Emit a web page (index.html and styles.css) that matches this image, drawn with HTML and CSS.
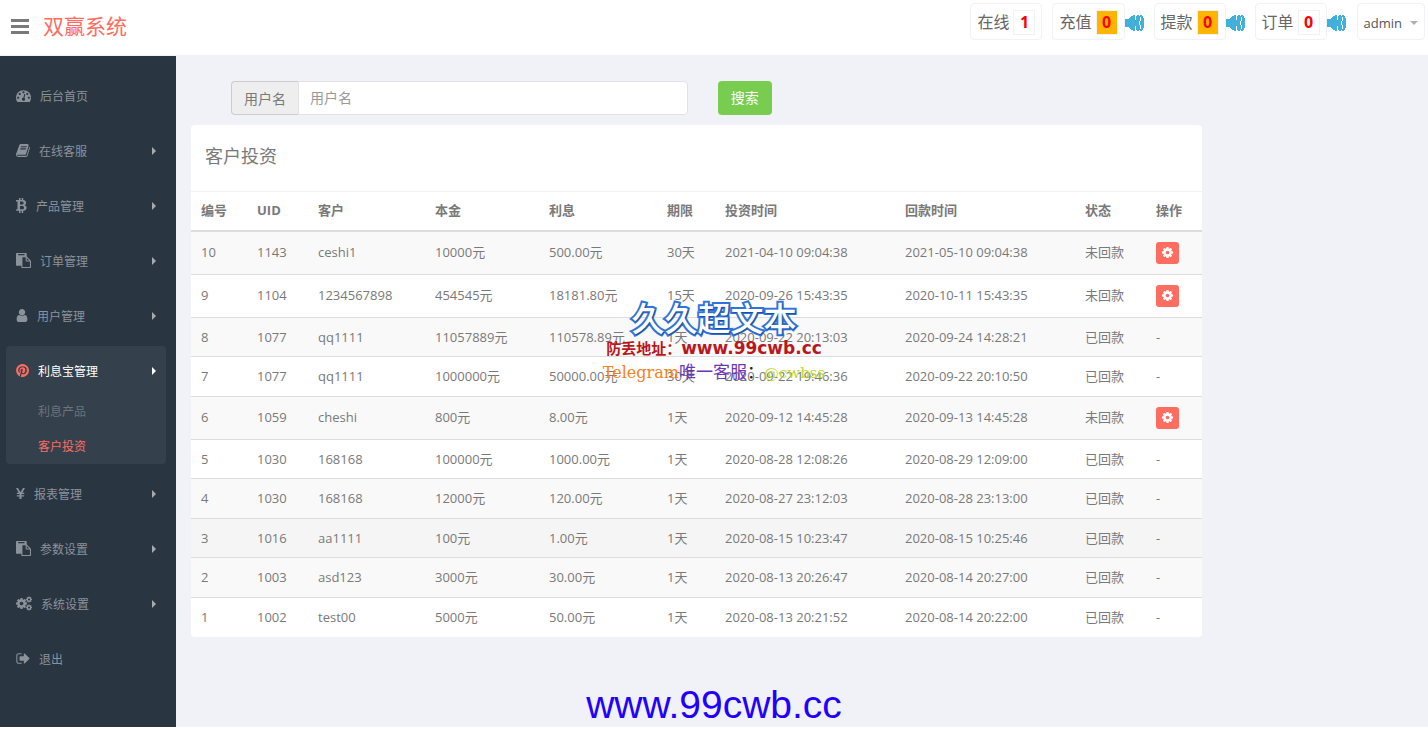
FILE: index.html
```
<!DOCTYPE html>
<html lang="zh-CN">
<head>
<meta charset="utf-8">
<title>双赢系统</title>
<link rel="stylesheet" href="styles.css">
</head>
<body>
<svg class="sprite" aria-hidden="true">
  <symbol id="cog" viewBox="0 0 1792 1792"><path d="M1152 896q0-106-75-181t-181-75-181 75-75 181 75 181 181 75 181-75 75-181zm512-109v222q0 12-8 23t-20 13l-185 28q-19 54-39 91 35 50 107 138 10 12 10 25t-9 23q-27 37-99 108t-94 71q-12 0-26-9l-138-108q-44 23-91 38-16 136-29 186-7 28-36 28h-222q-14 0-24.500-8.500t-11.500-21.500l-28-184q-49-16-90-37l-141 107q-10 9-25 9-14 0-25-11-126-114-165-168-7-10-7-23 0-12 8-23 15-21 51-66.500t54-70.500q-27-50-41-99l-183-27q-13-2-21-12.500t-8-23.500v-222q0-12 8-23t19-13l186-28q14-46 39-92-40-57-107-138-10-12-10-24 0-10 9-23 26-36 98.500-107.500t94.500-71.500q13 0 26 10l138 107q44-23 91-38 16-136 29-186 7-28 36-28h222q14 0 24.500 8.500t11.500 21.500l28 184q49 16 90 37l142-107q9-9 24-9 13 0 25 10 129 119 165 170 7 8 7 22 0 12-8 23-15 21-51 66.500t-54 70.500q26 50 41 98l183 28q13 2 21 12.500t8 23.500z"/></symbol>
  <symbol id="paste" viewBox="0 0 1792 1792"><path d="M768 1664h896v-640h-416q-40 0-68-28t-28-68v-416h-384v1152zm256-1440v-64q0-13-9.500-22.500t-22.500-9.500h-704q-13 0-22.500 9.500t-9.500 22.500v64q0 13 9.500 22.500t22.500 9.500h704q13 0 22.500-9.500t9.500-22.500zm256 672h299l-299-299v299zm512 128v672q0 40-28 68t-68 28h-960q-40 0-68-28t-28-68v-160h-544q-40 0-68-28t-28-68v-1344q0-40 28-68t68-28h1088q40 0 68 28t28 68v328q21 13 36 28l408 408q28 28 48 76t20 88z"/></symbol>
  <symbol id="sound" viewBox="0 0 19 18"><path d="M0 5h4V4h1V3h1V2h2V1h2v16H8v-1H6v-1H5v-1H4v-1H0zM11 2h1V1h2v1h1v5h-1v4h1v5h-1v1h-2v-1h-1v-4h-1V6h1zM15 1h2v1h1v2h1v10h-1v2h-1v1h-2v-2h1v-4h-1V7h1V3h-1z"/></symbol>
</svg>

<header class="header">
  <button class="toggle" type="button" aria-label="菜单"><svg width="18" height="16" viewBox="0 0 18 16"><path d="M0 1h18v3H0zM0 7h18v3H0zM0 13h18v3H0z"/></svg></button>
  <a class="logo" href="#">双赢系统</a>
  <div class="notices">
    <a class="notice" href="#">在线<b class="count">1</b></a>
    <div class="notice-group"><a class="notice" href="#">充值<b class="count count-alert">0</b></a><svg class="sound"><use href="#sound"/></svg></div>
    <div class="notice-group"><a class="notice" href="#">提款<b class="count count-alert">0</b></a><svg class="sound"><use href="#sound"/></svg></div>
    <div class="notice-group"><a class="notice" href="#">订单<b class="count">0</b></a><svg class="sound"><use href="#sound"/></svg></div>
    <button class="account" type="button">admin<span class="caret"></span></button>
  </div>
</header>

<div class="layout">
  <nav class="sidebar">
    <ul class="menu">
      <li><a class="menu-link" href="#"><svg width="15" height="15" viewBox="0 0 1792 1792"><path d="M384 1152q0-53-37.500-90.500t-90.500-37.500-90.500 37.500-37.500 90.500 37.500 90.500 90.500 37.500 90.500-37.500 37.500-90.500zm192-448q0-53-37.500-90.500t-90.500-37.500-90.500 37.500-37.500 90.500 37.500 90.500 90.500 37.500 90.500-37.500 37.500-90.500zm428 481l101-382q6-26-7.500-48.500t-38.500-29.500-48 6.500-30 39.500l-101 382q-60 5-107 43.500t-63 98.500q-20 77 20 146t117 89 146-20 89-117q16-60-6-117t-72-91zm660-33q0-53-37.500-90.500t-90.500-37.500-90.500 37.500-37.500 90.500 37.500 90.500 90.500 37.500 90.500-37.500 37.500-90.500zm-640-640q0-53-37.500-90.500t-90.500-37.500-90.500 37.500-37.500 90.500 37.500 90.500 90.500 37.500 90.500-37.500 37.500-90.500zm448 192q0-53-37.500-90.500t-90.500-37.500-90.500 37.500-37.500 90.500 37.500 90.500 90.500 37.500 90.500-37.500 37.500-90.500zm320 448q0 261-141 483-19 29-54 29h-1402q-35 0-54-29-141-221-141-483 0-182 71-348t191-286 286-191 348-71 348 71 286 191 191 286 71 348z"/></svg>后台首页</a></li>
      <li><a class="menu-link has-sub" href="#"><svg width="14" height="15" viewBox="64 0 1664 1792"><path d="M1703 478q40 57 18 129l-275 906q-19 64-76.500 107.500t-122.500 43.500h-923q-77 0-148.500-53.500t-99.500-131.500q-24-67-2-127 0-4 3-27t4-37q1-8-3-21.500t-3-19.500q2-11 8-21t16.500-23.500 16.500-23.500q23-38 45-91.500t30-91.500q3-10 .5-30t-.5-28q3-11 17-28t17-23q21-36 42-92t25-90q1-9-2.500-32t.5-28q4-13 22-30.500t22-22.500q19-26 42.500-84.500t27.500-96.500q1-8-3-25.500t-2-26.500q2-8 9-18t18-23 17-21q8-12 16.500-30.500t15-35 16-36 19.500-32 26.500-23.500 36-11.500 47.500 5.500l-1 3q38-9 51-9h761q74 0 114 56t18 130l-274 906q-36 119-71.500 153.500t-128.500 34.500h-869q-27 0-38 15-11 16-1 43 24 70 144 70h923q29 0 56-15.500t35-41.500l300-987q7-22 5-57 38 15 59 43zm-1064 2q-4 13 2 22.500t20 9.500h608q13 0 25.500-9.500t16.500-22.500l21-64q4-13-2-22.500t-20-9.500h-608q-13 0-25.500 9.500t-16.500 22.500zm-83 256q-4 13 2 22.500t20 9.500h608q13 0 25.500-9.500t16.500-22.500l21-64q4-13-2-22.500t-20-9.500h-608q-13 0-25.500 9.500t-16.500 22.500z"/></svg>在线客服</a></li>
      <li><a class="menu-link has-sub" href="#"><svg width="11" height="15" viewBox="0 0 11 15"><path d="M0 2h3V0h1.500v2h1.200V0h1.500v2.100C9.200 2.400 10.200 3.400 10.100 5c0 1-.6 1.700-1.500 2.200 1.400.4 2.100 1.300 2 2.600-.1 2-1.400 2.800-3.400 3V15H5.700v-2.200H4.500V15H3v-2.200H0l.3-1.500h1.200V3.600H0zM4 3.600v3h1.400c1.500 0 2.200-.5 2.200-1.500S6.900 3.600 5.400 3.600zM4 8v3.300h1.700c1.600 0 2.400-.6 2.400-1.600S7.300 8 5.700 8z" fill-rule="evenodd"/></svg>产品管理</a></li>
      <li><a class="menu-link has-sub" href="#"><svg width="15" height="15"><use href="#paste"/></svg>订单管理</a></li>
      <li><a class="menu-link has-sub" href="#"><svg width="12" height="15" viewBox="256 0 1280 1792"><path d="M1536 1399q0 109-62.500 187t-150.500 78h-854q-88 0-150.500-78t-62.500-187q0-85 8.500-160.500t31.500-152 58.500-131 94-89 134.500-34.500q131 128 313 128t313-128q76 0 134.500 34.500t94 89 58.500 131 31.500 152 8.500 160.500zm-256-887q0 159-112.500 271.500t-271.500 112.500-271.500-112.500-112.500-271.500 112.500-271.500 271.500-112.500 271.500 112.500 112.500 271.500z"/></svg>用户管理</a></li>
      <li class="open">
        <a class="menu-link has-sub" href="#"><svg width="13" height="15" viewBox="128 0 1536 1792"><path d="M1664 896q0 209-103 385.500t-279.500 279.500-385.500 103q-111 0-218-32 59-93 78-164 9-34 54-211 20 39 73 67.500t114 28.500q121 0 216-68.500t147-188.500 52-270q0-114-59.500-214t-172.500-163-255-63q-105 0-196 29t-154.500 77-109 110.500-67 129.500-21.500 134q0 104 40 183t117 111q30 12 38-20 2-7 8-31t8-30q6-23-11-43-51-61-51-151 0-151 104.500-259.500t273.500-108.500q151 0 235.500 82t84.500 213q0 170-68.500 289t-175.500 119q-61 0-98-43.500t-23-104.500q8-35 26.500-93.500t30-103 11.500-75.500q0-50-27-83t-77-33q-62 0-105 57t-43 142q0 73 25 122l-99 418q-17 70-13 177-206-91-333-281t-127-423q0-209 103-385.500t279.500-279.500 385.500-103 385.500 103 279.500 279.500 103 385.500z"/></svg>利息宝管理</a>
        <ul class="submenu">
          <li><a class="sub-link" href="#">利息产品</a></li>
          <li><a class="sub-link current" href="#">客户投资</a></li>
        </ul>
      </li>
      <li><a class="menu-link has-sub" href="#"><svg width="9" height="15" viewBox="0 0 9 15"><path d="M0 2h2l2.500 4.300L7 2h2L6.300 6.800h1.900V8H5.500v1.200h2.700v1.200H5.500V13h-2v-2.600H.8V9.200h2.700V8H.8V6.800h1.900z"/></svg>报表管理</a></li>
      <li><a class="menu-link has-sub" href="#"><svg width="15" height="15"><use href="#paste"/></svg>参数设置</a></li>
      <li><a class="menu-link has-sub" href="#"><svg width="16" height="15" viewBox="0 0 16 15"><use href="#cog" x="-1" y="1" width="13" height="13"/><use href="#cog" x="9" y="0" width="8" height="7"/><use href="#cog" x="9" y="8" width="8" height="7"/></svg>系统设置</a></li>
      <li><a class="menu-link" href="#"><svg width="14" height="15" viewBox="64 0 1600 1792"><path d="M704 1440q0 4 1 20t.5 26.500-3 23.500-10 19.500-20.500 6.500h-320q-119 0-203.500-84.500t-84.500-203.500v-704q0-119 84.500-203.500t203.500-84.500h320q13 0 22.500 9.500t9.500 22.500q0 4 1 20t.5 26.500-3 23.500-10 19.500-20.500 6.500h-320q-66 0-113 47t-47 113v704q0 66 47 113t113 47h312l11.500 1 11.500 3 8 5.500 7 9 2 13.500zm928-544q0 26-19 45l-544 544q-19 19-45 19t-45-19-19-45v-288h-448q-26 0-45-19t-19-45v-384q0-26 19-45t45-19h448v-288q0-26 19-45t45-19 45 19l544 544q19 19 19 45z"/></svg>退出</a></li>
    </ul>
  </nav>

  <main class="main">
    <form class="search">
      <div class="input-group">
        <label for="username">用户名</label>
        <input id="username" type="text" placeholder="用户名">
      </div>
      <button class="btn-search" type="button">搜索</button>
    </form>

    <div class="content">
      <section class="panel">
        <h1 class="panel-title">客户投资</h1>
        <table class="records">
          <colgroup><col class="c-no"><col class="c-uid"><col class="c-name"><col class="c-sum"><col class="c-interest"><col class="c-term"><col class="c-time"><col class="c-time"><col class="c-state"><col class="c-action"></colgroup>
          <thead>
            <tr><th>编号</th><th>UID</th><th>客户</th><th>本金</th><th>利息</th><th>期限</th><th>投资时间</th><th>回款时间</th><th>状态</th><th>操作</th></tr>
          </thead>
          <tbody>
            <tr><td>10</td><td>1143</td><td>ceshi1</td><td>10000元</td><td>500.00元</td><td>30天</td><td>2021-04-10 09:04:38</td><td>2021-05-10 09:04:38</td><td>未回款</td><td><button class="btn-cog" type="button" aria-label="操作"><svg><use href="#cog"/></svg></button></td></tr>
            <tr><td>9</td><td>1104</td><td>1234567898</td><td>454545元</td><td>18181.80元</td><td>15天</td><td>2020-09-26 15:43:35</td><td>2020-10-11 15:43:35</td><td>未回款</td><td><button class="btn-cog" type="button" aria-label="操作"><svg><use href="#cog"/></svg></button></td></tr>
            <tr><td>8</td><td>1077</td><td>qq1111</td><td>11057889元</td><td>110578.89元</td><td>1天</td><td>2020-09-22 20:13:03</td><td>2020-09-24 14:28:21</td><td>已回款</td><td>-</td></tr>
            <tr><td>7</td><td>1077</td><td>qq1111</td><td>1000000元</td><td>50000.00元</td><td>30天</td><td>2020-09-22 19:46:36</td><td>2020-09-22 20:10:50</td><td>已回款</td><td>-</td></tr>
            <tr><td>6</td><td>1059</td><td>cheshi</td><td>800元</td><td>8.00元</td><td>1天</td><td>2020-09-12 14:45:28</td><td>2020-09-13 14:45:28</td><td>未回款</td><td><button class="btn-cog" type="button" aria-label="操作"><svg><use href="#cog"/></svg></button></td></tr>
            <tr><td>5</td><td>1030</td><td>168168</td><td>100000元</td><td>1000.00元</td><td>1天</td><td>2020-08-28 12:08:26</td><td>2020-08-29 12:09:00</td><td>已回款</td><td>-</td></tr>
            <tr><td>4</td><td>1030</td><td>168168</td><td>12000元</td><td>120.00元</td><td>1天</td><td>2020-08-27 23:12:03</td><td>2020-08-28 23:13:00</td><td>已回款</td><td>-</td></tr>
            <tr class="highlight"><td>3</td><td>1016</td><td>aa1111</td><td>100元</td><td>1.00元</td><td>1天</td><td>2020-08-15 10:23:47</td><td>2020-08-15 10:25:46</td><td>已回款</td><td>-</td></tr>
            <tr><td>2</td><td>1003</td><td>asd123</td><td>3000元</td><td>30.00元</td><td>1天</td><td>2020-08-13 20:26:47</td><td>2020-08-14 20:27:00</td><td>已回款</td><td>-</td></tr>
            <tr><td>1</td><td>1002</td><td>test00</td><td>5000元</td><td>50.00元</td><td>1天</td><td>2020-08-13 20:21:52</td><td>2020-08-14 20:22:00</td><td>已回款</td><td>-</td></tr>
          </tbody>
        </table>
      </section>
    </div>
  </main>
</div>

<div class="stamp">
  <div class="stamp-name">久久超文本</div>
  <div class="stamp-site">防丢地址：<span>www.99cwb.cc</span></div>
  <div class="stamp-contact"><span class="orange">Telegram</span><span class="purple">唯一客服</span>：<span class="lime">@cwbss</span></div>
</div>
<div class="site-url">www.99cwb.cc</div>
</body>
</html>
```
FILE: styles.css
```
* { box-sizing: border-box; }
body {
  margin: 0;
  display: flex;
  flex-direction: column;
  min-height: 100vh;
  padding-bottom: 2px;
  background: #fff;
  color: #797979;
  font: 13px/1.43 "Open Sans", "Noto Sans CJK SC", sans-serif;
}
button, input { font: inherit; }
button { cursor: pointer; }
a { color: inherit; text-decoration: none; }
ul { margin: 0; padding: 0; list-style: none; }
svg { fill: currentColor; flex: none; }
.sprite { position: absolute; width: 0; height: 0; }

/* header */
.header {
  display: flex;
  align-items: flex-start;
  height: 56px;
  padding: 3px 3px 0 11px;
  border-bottom: 1px solid #f1f2f7;
}
.toggle { display: flex; margin-top: 15px; padding: 0; border: 0; background: none; color: #797979; }
.logo { margin: 8px 0 0 14px; color: #ff6c60; font-size: 21px; line-height: 30px; }
.notices { display: flex; gap: 10px; margin-left: auto; }
.notice-group { display: flex; align-items: center; }
.notice, .account {
  display: flex;
  align-items: center;
  height: 37px;
  padding: 0 6px;
  border: 1px solid #f1f2f7;
  border-radius: 4px;
  background: #fff;
  color: #666;
}
.notice { gap: 4px; padding-top: 2px; font-size: 16px; }
.count {
  width: 22px;
  border: 1px solid #f1f2f7;
  color: #f00;
  line-height: 23px;
  text-align: center;
}
.count-alert { background: #ffb400; }
.sound { width: 19px; height: 18px; margin-top: 3px; color: #41b1dc; }
.account { gap: 8px; margin-left: 1px; padding-top: 3px; color: #555; }
.caret { border: 4px solid transparent; border-top-color: #aeb2b7; border-bottom: 0; }

/* sidebar */
.layout { display: flex; flex: 1; }
.sidebar { flex: 0 0 176px; padding: 15px 10px 15px 6px; background: #2a3542; color: #8b929a; font-size: 12px; }
.menu { display: flex; flex-direction: column; gap: 5px; }
.menu-link { display: flex; align-items: center; gap: 9px; height: 50px; padding: 2px 10px 0; }
.menu-link svg { margin-bottom: 3px; }
.has-sub::after {
  content: "";
  margin: 0 0 2px auto;
  border: 4px solid transparent;
  border-left-color: #aaa;
  border-right: 0;
}
.open { padding-bottom: 2px; border-radius: 4px; background: #35404d; }
.open .menu-link { color: #fff; }
.open .menu-link svg { color: #ff6c60; }
.open .has-sub::after { border-left-color: #fff; }
.submenu { display: flex; flex-direction: column; gap: 5px; padding: 1px 0 0 32px; color: #6b747c; }
.sub-link { display: block; line-height: 30px; }
.current { color: #ff6c60; }

/* main */
.main { flex: 1; min-width: 0; padding: 25px 15px 60px; background: #f1f2f7; }
.search {
  display: grid;
  grid-template-columns: 2fr 3fr;
  gap: 30px;
  padding: 0 10px 0 40px;
  margin-bottom: 10px;
  font-size: 14px;
}
.input-group { display: flex; height: 34px; }
.input-group label {
  padding: 0 12px;
  border: 1px solid #ccc;
  border-right: 0;
  border-radius: 4px 0 0 4px;
  background: #eee;
  line-height: 33px;
}
.input-group input {
  flex: 1;
  min-width: 0;
  padding: 1px 11px 0;
  border: 1px solid #e2e2e4;
  border-radius: 0 4px 4px 0;
  background: #fff;
  color: #797979;
}
.input-group input::placeholder { color: #999; }
.btn-search {
  justify-self: start;
  padding: 1px 13px 0;
  border: 0;
  border-radius: 4px;
  background: #78cd51;
  color: #fff;
}
.content { display: grid; grid-template-columns: 5fr 1fr; gap: 9px; }
.panel { overflow: hidden; border-radius: 4px; background: #fff; }
.panel-title { margin: 0; padding: 15px 14px; font-size: 18px; font-weight: 400; line-height: 32px; height: 66px; }
.records { width: 100%; border-collapse: collapse; table-layout: fixed; }
.records th, .records td {
  padding: 10px 0 10px 10px;
  border-top: 1px solid #ddd;
  text-align: left;
  vertical-align: middle;
  white-space: nowrap;
}
.records th { padding: 9px 0 10px 10px; border-top-color: #f1f2f7; border-bottom: 2px solid #ddd; }
.records tbody tr:nth-child(odd), .records tr:nth-child(9) { background: #f9f9f9; }
.records tbody .highlight { background: #f5f5f5; }
.records .c-no { width: 56px; }
.records .c-uid { width: 61px; }
.records .c-name { width: 117px; }
.records .c-sum { width: 114px; }
.records .c-interest { width: 118px; }
.records .c-term { width: 58px; }
.records .c-time { width: 180px; }
.records .c-state { width: 71px; }
.records .c-action { width: 56px; }
.btn-cog {
  display: flex;
  align-items: center;
  justify-content: center;
  width: 23px;
  height: 22px;
  padding: 0;
  border: 0;
  border-radius: 3px;
  background: #ff6c60;
  color: #fff;
}
.btn-cog svg { width: 13px; height: 13px; }

/* overlays centred on the window */
.stamp, .site-url { position: absolute; left: 0; right: 0; text-align: center; pointer-events: none; }
.stamp { top: 296px; }
.stamp-name {
  color: #fff;
  font: 500 33px/43px "Noto Sans CJK SC", sans-serif;
  -webkit-text-stroke: 4px #2f74dc;
  paint-order: stroke fill;
  text-shadow: 1px 1px 1px #1b4c9c;
}
.stamp-site { color: #b8181c; font: 700 15px/18px "Noto Sans CJK SC", sans-serif; }
.stamp-site span { font-family: "DejaVu Sans", sans-serif; font-size: 17px; }
.stamp-contact { color: #222; font: 17px/32px "Liberation Serif", "Noto Sans CJK SC", serif; }
.orange { color: #f58220; font: 16px "DejaVu Serif", serif; }
.purple { color: #6a35b8; }
.lime { color: #c3d82c; font: 15px "DejaVu Serif", serif; }
.site-url { bottom: 2px; color: #20f; font: 39px/44px "Liberation Sans", sans-serif; }
```
